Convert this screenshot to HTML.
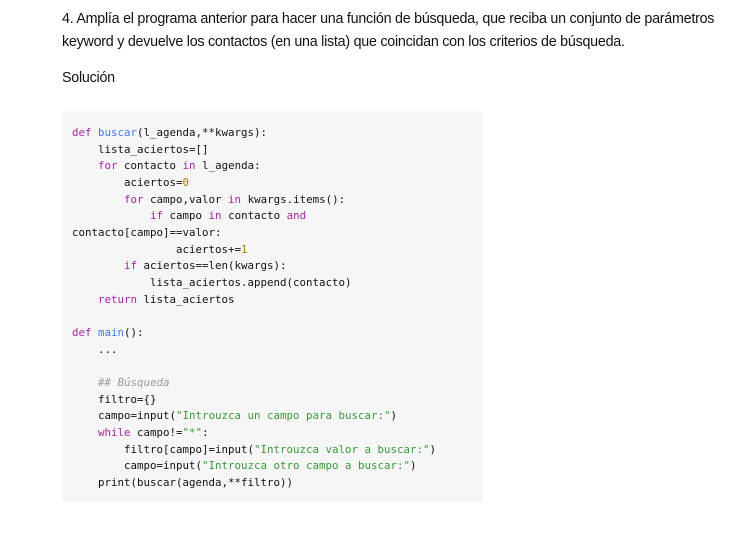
<!DOCTYPE html>
<html><head><meta charset="utf-8"><style>
body{margin:0;background:#fff;width:749px;height:535px;overflow:hidden;font-family:"Liberation Sans",sans-serif;color:#111}
.p{position:absolute;left:62px;font-size:14.3px;line-height:23px;letter-spacing:-0.25px}
pre{position:absolute;left:62px;top:111px;width:421px;height:391px;margin:0;background:#f6f6f6;border-radius:3px;box-sizing:border-box;padding:14px 0 0 10px;font-family:"DejaVu Sans Mono",monospace;font-size:10.8px;line-height:16.67px;color:#111}
.k{color:#a626a4}.f{color:#4078f2}.n{color:#b07800}.s{color:#3a9a3a}.c{color:#999;font-style:italic}
</style></head><body>
<div class="p" style="top:8px">4. Amplía el programa anterior para hacer una función de búsqueda, que reciba un conjunto de parámetros<br>keyword y devuelve los contactos (en una lista) que coincidan con los criterios de búsqueda.</div>
<div class="p" style="top:67px">Solución</div>
<pre><span class="k">def</span> <span class="f">buscar</span>(l_agenda,**kwargs):
    lista_aciertos=[]
    <span class="k">for</span> contacto <span class="k">in</span> l_agenda:
        aciertos=<span class="n">0</span>
        <span class="k">for</span> campo,valor <span class="k">in</span> kwargs.items():
            <span class="k">if</span> campo <span class="k">in</span> contacto <span class="k">and</span>
contacto[campo]==valor:
                aciertos+=<span class="n">1</span>
        <span class="k">if</span> aciertos==len(kwargs):
            lista_aciertos.append(contacto)
    <span class="k">return</span> lista_aciertos

<span class="k">def</span> <span class="f">main</span>():
    ...

    <span class="c">## Búsqueda</span>
    filtro={}
    campo=input(<span class="s">"Introuzca un campo para buscar:"</span>)
    <span class="k">while</span> campo!=<span class="s">"*"</span>:
        filtro[campo]=input(<span class="s">"Introuzca valor a buscar:"</span>)
        campo=input(<span class="s">"Introuzca otro campo a buscar:"</span>)
    print(buscar(agenda,**filtro))</pre>
</body></html>
